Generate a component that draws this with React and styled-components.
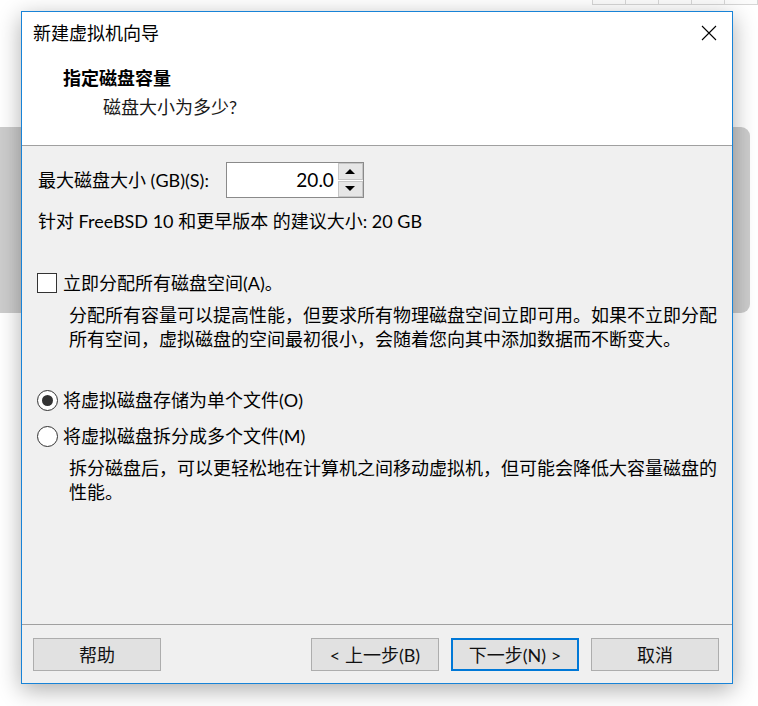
import React from "react";
import styled, { createGlobalStyle, css } from "styled-components";

const Global = createGlobalStyle`
  html, body { margin: 0; padding: 0; background: #ffffff; }
  * { box-sizing: border-box; }
`;

const FONT = `"Lato", "Noto Sans CJK SC", sans-serif`;

const Desktop = styled.div`
  position: relative;
  width: 758px;
  height: 706px;
  overflow: hidden;
  background: #ffffff;
  font-family: ${FONT};
`;

const BackTable = styled.div`
  position: absolute;
  left: 592px;
  top: -20px;
  width: 166px;
  height: 25px;
  display: grid;
  grid-template-columns: repeat(5, 33px);
  border: 1px solid #d6d6d6;
  background: #fbfbfb;
`;

const BackCell = styled.div`
  border-right: 1px solid #d6d6d6;
`;

const BackPanel = styled.div`
  position: absolute;
  left: -12px;
  top: 127px;
  width: 762px;
  height: 186px;
  border-radius: 9px;
  background: #cdcdcd;
`;

const Dialog = styled.div`
  position: absolute;
  left: 21px;
  top: 11px;
  width: 712px;
  height: 673px;
  border: 1px solid #1883d7;
  background: #f0f0f0;
  display: flex;
  flex-direction: column;
  box-shadow: 0 6px 22px rgba(0, 0, 0, 0.32);
`;

const TitleBar = styled.div`
  height: 42px;
  flex: none;
  display: flex;
  align-items: center;
  justify-content: space-between;
  background: #ffffff;
  padding-left: 11px;
`;

const Title = styled.div`
  font-size: 18px;
  line-height: 24px;
  color: #000;
`;

const CloseBtn = styled.div`
  width: 46px;
  height: 42px;
  display: flex;
  align-items: center;
  justify-content: center;
`;

const Header = styled.div`
  height: 92px;
  flex: none;
  background: #ffffff;
  border-bottom: 1px solid #a0a0a0;
  padding-top: 12px;
  display: flex;
  flex-direction: column;
`;

const HeaderTitle = styled.div`
  padding-left: 41px;
  font-size: 18px;
  line-height: 24px;
  font-weight: 700;
  color: #000;
`;

const HeaderSub = styled.div`
  margin-top: 5px;
  padding-left: 81px;
  font-size: 18px;
  line-height: 24px;
  color: #1a1a1a;
`;

const Body = styled.div`
  flex: 1;
  display: flex;
  flex-direction: column;
  padding: 16px 16px 0 16px;
`;

const Row = styled.div`
  display: flex;
  align-items: center;
  gap: ${(p) => p.$gap || 0}px;
  margin-top: ${(p) => p.$mt || 0}px;
  height: ${(p) => p.$h || 24}px;
`;

const Text = styled.div`
  font-size: 18px;
  line-height: 24px;
  color: #000;
  white-space: nowrap;
`;

const Para = styled.div`
  margin-top: ${(p) => p.$mt || 0}px;
  padding-left: 31px;
  font-size: 18px;
  line-height: 24px;
  color: #000;
  width: 680px;
`;

const SpinBox = styled.div`
  width: 138px;
  height: 36px;
  border: 1px solid #8a8a8a;
  background: #ffffff;
  display: flex;
  align-items: stretch;
`;

const SpinValue = styled.div`
  flex: 1;
  text-align: right;
  padding-right: 4px;
  font-size: 19px;
  line-height: 33px;
  color: #000;
`;

const SpinButtons = styled.div`
  width: 25px;
  display: flex;
  flex-direction: column;
  gap: 1px;
`;

const SpinBtn = styled.div`
  flex: 1;
  background: #e6e6e6;
  border: 1px solid #c6c6c6;
  display: flex;
  align-items: center;
  justify-content: center;
`;

const Arrow = styled.div`
  width: 0;
  height: 0;
  border-left: 5px solid transparent;
  border-right: 5px solid transparent;
  ${(p) =>
    p.$up
      ? css`border-bottom: 5px solid #000;`
      : css`border-top: 5px solid #000;`}
`;

const CheckBox = styled.div`
  width: 20px;
  height: 20px;
  border: 1px solid #333;
  background: #fff;
  margin-left: -1px;
  flex: none;
`;

const Radio = styled.div`
  width: 21px;
  height: 21px;
  border: 1px solid #333;
  border-radius: 50%;
  background: #fff;
  margin-left: -1px;
  flex: none;
  display: flex;
  align-items: center;
  justify-content: center;
  &::after {
    content: "";
    display: ${(p) => (p.$checked ? "block" : "none")};
    width: 11px;
    height: 11px;
    border-radius: 50%;
    background: #333;
  }
`;

const Footer = styled.div`
  height: 59px;
  flex: none;
  border-top: 1px solid #a0a0a0;
  display: flex;
  align-items: flex-start;
  padding: 13px 13px 0 11px;
  gap: 12px;
`;

const Spacer = styled.div`
  flex: 1;
`;

const Button = styled.div`
  width: 128px;
  height: 33px;
  background: #e1e1e1;
  border: ${(p) => (p.$default ? "2px solid #0078d7" : "1px solid #adadad")};
  display: flex;
  align-items: center;
  justify-content: center;
  font-size: 18px;
  line-height: 24px;
  color: #111;
  white-space: nowrap;
`;

export default function App() {
  return (
    <>
      <Global />
      <Desktop>
        <BackTable>
          <BackCell />
          <BackCell />
          <BackCell />
          <BackCell />
          <BackCell />
        </BackTable>
        <BackPanel />
        <Dialog>
          <TitleBar>
            <Title>新建虚拟机向导</Title>
            <CloseBtn>
              <svg width="16" height="16" viewBox="0 0 16 16">
                <path d="M1 1 L15 15 M15 1 L1 15" stroke="#000" strokeWidth="1.1" fill="none" />
              </svg>
            </CloseBtn>
          </TitleBar>
          <Header>
            <HeaderTitle>指定磁盘容量</HeaderTitle>
            <HeaderSub>磁盘大小为多少?</HeaderSub>
          </Header>
          <Body>
            <Row $h={36} $gap={17}>
              <Text>最大磁盘大小 (GB)(S):</Text>
              <SpinBox>
                <SpinValue>20.0</SpinValue>
                <SpinButtons>
                  <SpinBtn>
                    <Arrow $up />
                  </SpinBtn>
                  <SpinBtn>
                    <Arrow />
                  </SpinBtn>
                </SpinButtons>
              </SpinBox>
            </Row>
            <Row $mt={11}>
              <Text>针对 FreeBSD 10 和更早版本 的建议大小: 20 GB</Text>
            </Row>
            <Row $mt={38} $gap={6}>
              <CheckBox />
              <Text>立即分配所有磁盘空间(A)。</Text>
            </Row>
            <Para $mt={8}>
              分配所有容量可以提高性能，但要求所有物理磁盘空间立即可用。如果不立即分配所有空间，虚拟磁盘的空间最初很小，会随着您向其中添加数据而不断变大。
            </Para>
            <Row $mt={37} $gap={5}>
              <Radio $checked />
              <Text>将虚拟磁盘存储为单个文件(O)</Text>
            </Row>
            <Row $mt={12} $gap={5}>
              <Radio />
              <Text>将虚拟磁盘拆分成多个文件(M)</Text>
            </Row>
            <Para $mt={8}>
              拆分磁盘后，可以更轻松地在计算机之间移动虚拟机，但可能会降低大容量磁盘的性能。
            </Para>
          </Body>
          <Footer>
            <Button>帮助</Button>
            <Spacer />
            <Button>&lt; 上一步(B)</Button>
            <Button $default>下一步(N) &gt;</Button>
            <Button>取消</Button>
          </Footer>
        </Dialog>
      </Desktop>
    </>
  );
}
